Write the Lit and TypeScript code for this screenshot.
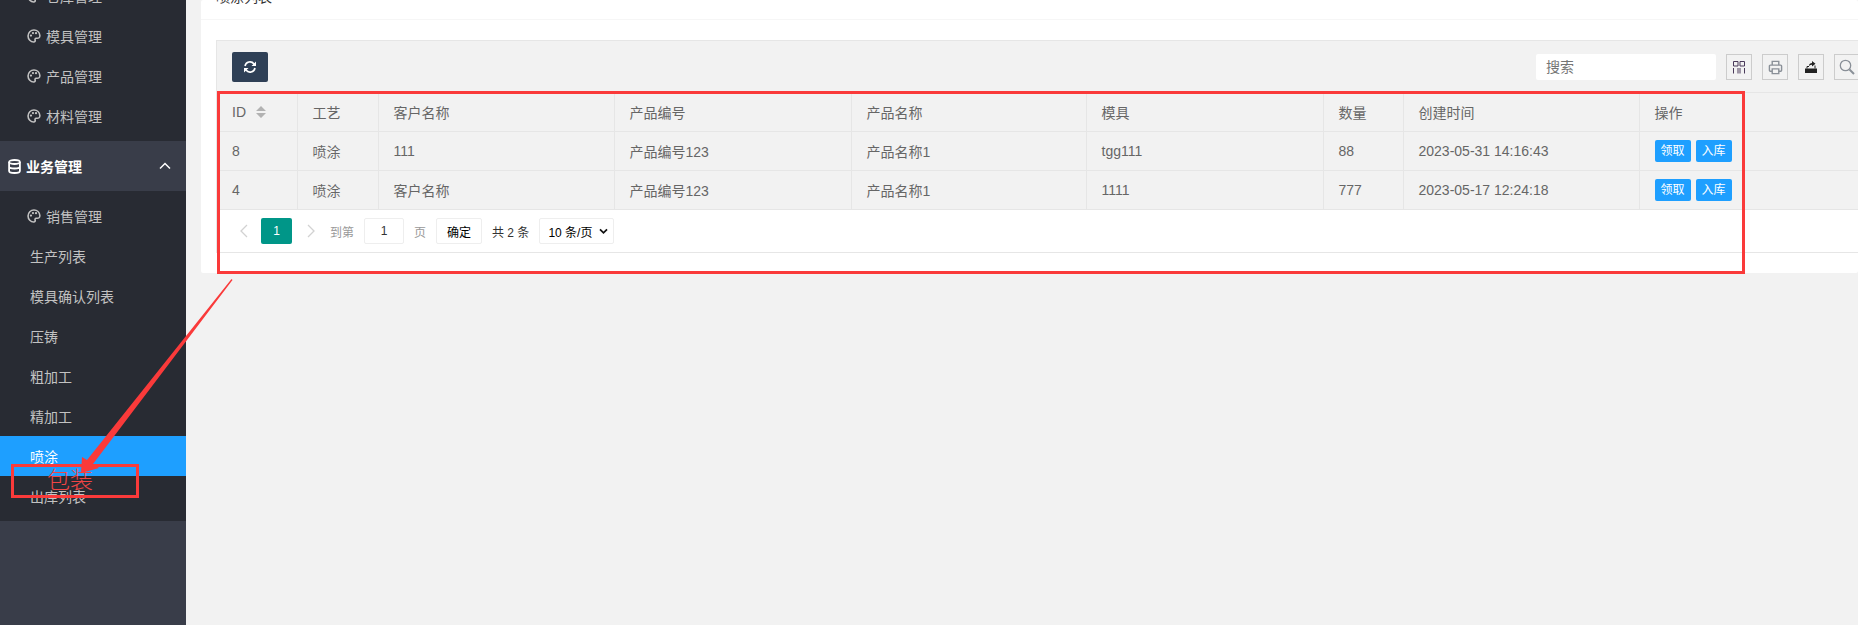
import { LitElement, html, css } from "lit";
import { customElement } from "lit/decorators.js";

const palette = html`<svg viewBox="0 0 16 16" width="14" height="14"><path fill="none" stroke="currentColor" stroke-width="1.8" d="M8 1.200C4.200 1.200 1.200 4.100 1.200 7.900c0 3.800 3 6.900 6.600 6.900 1.200 0 1.700-.8 1.500-1.600-.2-.9-.4-2.300 1-2.600 1.100-.2 2.300.1 3.200-.4 1-.6 1.300-1.500 1.200-2.700C14.400 3.700 11.500 1.200 8 1.200z"/><circle cx="4.500" cy="7.500" r="1.300" fill="currentColor"/><circle cx="6.800" cy="4.600" r="1.300" fill="currentColor"/><circle cx="10.300" cy="4.800" r="1.300" fill="currentColor"/></svg>`;

const rows = [
  ["8", "喷涂", "111", "产品编号123", "产品名称1", "tgg111", "88", "2023-05-31 14:16:43"],
  ["4", "喷涂", "客户名称", "产品编号123", "产品名称1", "1111", "777", "2023-05-17 12:24:18"],
];
const heads = ["工艺", "客户名称", "产品编号", "产品名称", "模具", "数量", "创建时间", "操作"];
const colWidths = [80, 81, 236, 237, 235, 237, 80, 236, 236];

@customElement("app-root")
export class AppRoot extends LitElement {
  static styles = css`
    :host { display: block; width: 1858px; height: 625px; overflow: hidden; position: relative; background: #f2f2f2;
      font-family: "Liberation Sans", "Noto Sans CJK SC", sans-serif; font-size: 14px; color: #666; }
    .page { display: flex; height: 625px; }
    .side { width: 186px; flex: none; background: #393d49; overflow: hidden; color: #c2c2c2; }
    .dark { background: #282b33; }
    .top { margin-top: -24px; height: 165px; box-sizing: border-box; }
    .low { padding: 5px 0; }
    .item { height: 40px; display: flex; align-items: center; padding-left: 30px; gap: 5px; white-space: nowrap; }
    .item.ic { padding-left: 27px; }
    .item.on { background: #1e9fff; color: #fff; }
    .group { height: 50px; display: flex; align-items: center; background: #393d49; color: #fff; font-weight: 700; padding-left: 8px; gap: 5px; }
    .group .chev { margin-left: auto; margin-right: 15px; }
    .main { flex: 1; min-width: 0; padding: 0 0 0 15px; }
    .card { background: #fff; height: 273px; border-radius: 2px; box-sizing: border-box; overflow: hidden; }
    .title { height: 20px; border-bottom: 1px solid #f6f6f6; box-sizing: border-box; display: flex; align-items: flex-end; padding: 0 15px; line-height: 20px; color: #333; }
    .title span { margin-bottom: 12px; }
    .body { padding: 20px 0 0 15px; }
    .box { width: 1659px; border-top: 1px solid #e6e6e6; border-left: 1px solid #e6e6e6; box-sizing: border-box; }
    .tools { height: 51px; background: #f2f2f2; display: flex; align-items: center; padding: 1px 15px 0; box-sizing: border-box; }
    .refresh { width: 36px; height: 30px; background: #2f4056; border-radius: 2px; display: flex; align-items: center; justify-content: center; color: #fff; }
    .tools-r { display: flex; align-items: center; margin-left: auto; gap: 10px; }
    .search { width: 180px; height: 26px; background: #fff; padding-left: 10px; box-sizing: border-box; line-height: 26px; font-size: 14px; color: #757575; border-radius: 2px; }
    .tb { width: 26px; height: 26px; border: 1px solid #ccc; box-sizing: border-box; display: flex; align-items: center; justify-content: center; flex: none; }
    table { border-collapse: collapse; table-layout: fixed; width: 1658px; background: #f2f2f2; }
    th, td { border: 1px solid #e6e6e6; border-left: 0; height: 39px; padding: 0 15px; box-sizing: border-box; text-align: left; font-weight: 400; white-space: nowrap; color: #666; }
    .sort { display: inline-block; width: 10px; margin-left: 10px; vertical-align: -1px; }
    .btn { display: inline-block; width: 36px; height: 22px; line-height: 22px; background: #1e9fff; color: #fff; text-align: center; font-size: 12px; border-radius: 2px; margin-right: 5px; }
    .pager { height: 42px; border-bottom: 1px solid #e6e6e6; display: flex; align-items: center; padding: 0 0 0 10px; font-size: 12px; color: #999; }
    .arrowbtn { width: 34px; display: flex; justify-content: center; color: #d2d2d2; }
    .arrowbtn.next { margin-left: 2px; }
    .cur { width: 31px; height: 26px; background: #009688; color: #fff; line-height: 26px; text-align: center; border-radius: 2px; }
    .jump { width: 40px; height: 26px; border: 1px solid #eee; box-sizing: border-box; text-align: center; line-height: 24px; color: #333; border-radius: 2px; }
    .ok { width: 46px; height: 26px; border: 1px solid #eee; box-sizing: border-box; text-align: center; line-height: 28px; color: #000; border-radius: 2px; }
    .sel { width: 75px; height: 26px; border: 1px solid #eee; box-sizing: border-box; border-radius: 2px; display: flex; align-items: center; padding: 0 5px 0 8px; justify-content: space-between; color: #000; white-space: nowrap; }
    .to { margin: 0 10px 0 2px; }
    .pg { margin: 0 10px; }
    .total { margin: 0 10px; color: #333; }
    .over { position: absolute; pointer-events: none; }
    .redbox { left: 217px; top: 91px; width: 1528px; height: 183px; border: 3px solid #fa3a3a; box-sizing: border-box; }
    .redbox2 { left: 11px; top: 464px; width: 128px; height: 34px; border: 3px solid #fa3a3a; box-sizing: border-box; }
    .pack { left: 47px; top: 466px; font-size: 23px; line-height: 28px; font-weight: 300; color: #f04545; }
    .arrow { left: 0; top: 0; }
  `;

  render() {
    return html`
      <div class="page">
        <aside class="side">
          <div class="dark top">
            ${["仓库管理", "模具管理", "产品管理", "材料管理"].map((t) => html`<div class="item ic">${palette}${t}</div>`)}
          </div>
          <div class="group">
            <svg viewBox="0 0 13 15" width="13" height="15" fill="none" stroke="#fff" stroke-width="1.800"><ellipse cx="6.500" cy="3" rx="5.400" ry="2"/><path d="M1.100 3v9c0 1.100 2.400 2 5.400 2s5.400-.9 5.400-2V3M1.100 7.500c0 1.100 2.400 2 5.400 2s5.400-.9 5.400-2"/></svg>
            业务管理
            <svg class="chev" viewBox="0 0 12 8" width="12" height="8" fill="none" stroke="#fff" stroke-width="1.500"><path d="M1 6.500l5-5 5 5"/></svg>
          </div>
          <div class="dark low">
            <div class="item ic">${palette}销售管理</div>
            ${["生产列表", "模具确认列表", "压铸", "粗加工", "精加工"].map((t) => html`<div class="item">${t}</div>`)}
            <div class="item on">喷涂</div>
            <div class="item">出库列表</div>
          </div>
        </aside>
        <main class="main">
          <div class="card">
            <div class="title"><span>喷涂列表</span></div>
            <div class="body">
              <div class="box">
                <div class="tools">
                  <div class="refresh"><svg viewBox="0 0 14 14" width="14" height="14" fill="none" stroke="#fff" stroke-width="1.600"><path d="M2 6a5 5 0 0 1 9-2l1 1M12 8a5 5 0 0 1-9 2L2 9"/><path fill="#fff" stroke="none" d="M13 1.500V6H8.500zM1 12.500V8h4.500z"/></svg></div>
                  <div class="tools-r">
                    <div class="search">搜索</div>
                    <div class="tb"><svg viewBox="0 0 14 14" width="14" height="14" fill="none" stroke="#4a3a5a" stroke-width="1"><path d="M1.500 1.500h4.500v4.500H1.500zM8 1.500h4.500v4.500H8zM1.500 8v5.500M6 8v5.500M8 8v5.500M12.500 8v5.500"/></svg></div>
                    <div class="tb"><svg viewBox="0 0 16 16" width="15" height="15" fill="none" stroke="#8a9098" stroke-width="1.500"><path d="M4.500 5V1.500h7V5M4 12H2.500a1 1 0 0 1-1-1V6.500a1 1 0 0 1 1-1h11a1 1 0 0 1 1 1V11a1 1 0 0 1-1 1H12M4.500 9.500h7v5h-7z"/></svg></div>
                    <div class="tb"><svg viewBox="0 0 14 14" width="14" height="14"><path fill="#222" d="M1 8.500h12V13H1z"/><path fill="none" stroke="#222" d="M3 8.500V6.500h2M11 8.500V5.500"/><path fill="#222" d="M5 6C5 3.800 6.500 3 8 3V1l3.500 2.800L8 6.500V4.800C7 4.800 6 5.200 5 6z"/></svg></div>
                    <div class="tb"><svg viewBox="0 0 16 16" width="16" height="16" fill="none" stroke="#8a9098" stroke-width="1.300"><circle cx="6.500" cy="6.500" r="5.200"/><path d="M10.500 10.500l4.500 4.500" stroke-width="2"/></svg></div>
                  </div>
                </div>
                <table>
                  <colgroup>
                    ${colWidths.map((w) => html`<col style="width:${w}px" />`)}
                  </colgroup>
                  <tr>
                    <th>ID<svg class="sort" viewBox="0 0 10 12" width="10" height="12"><path fill="#b2b2b2" d="M5 0l5 5H0zM0 7h10l-5 5z"/></svg></th>
                    ${heads.map((h) => html`<th>${h}</th>`)}
                  </tr>
                  ${rows.map((r) => html`<tr>
                    ${r.map((c) => html`<td>${c}</td>`)}
                    <td><span class="btn">领取</span><span class="btn">入库</span></td>
                  </tr>`)}
                </table>
                <div class="pager">
                  <div class="arrowbtn"><svg viewBox="0 0 10 14" width="10" height="14" fill="none" stroke="currentColor" stroke-width="1.300"><path d="M8 1L2 7l6 6"/></svg></div>
                  <div class="cur">1</div>
                  <div class="arrowbtn next"><svg viewBox="0 0 10 14" width="10" height="14" fill="none" stroke="currentColor" stroke-width="1.300"><path d="M2 1l6 6-6 6"/></svg></div>
                  <span class="to">到第</span>
                  <div class="jump">1</div>
                  <span class="pg">页</span>
                  <div class="ok">确定</div>
                  <span class="total">共 2 条</span>
                  <div class="sel">10 条/页<svg viewBox="0 0 10 8" width="9" height="7" fill="none" stroke="#111" stroke-width="2"><path d="M1 1.500l4 4 4-4"/></svg></div>
                </div>
              </div>
            </div>
          </div>
        </main>
      </div>
      <div class="over redbox"></div>
      <div class="over redbox2"></div>
      <div class="over pack">包装</div>
      <svg class="over arrow" width="300" height="500" viewBox="0 0 300 500"><path fill="#fa3a3a" d="M232.500 280L93 464l6 4-18 5 1-16 5 3L231.500 279z"/></svg>
    `;
  }
}
